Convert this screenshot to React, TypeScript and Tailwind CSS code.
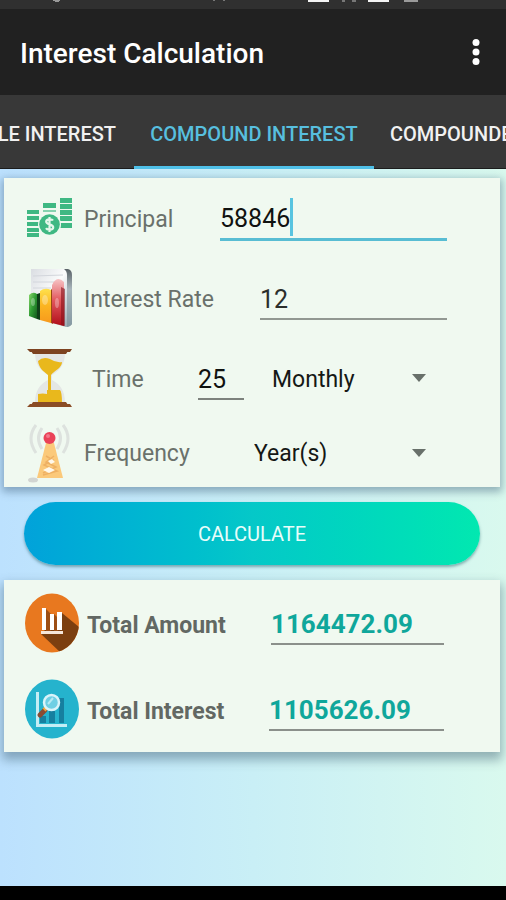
import { useState } from "react";

const MoneyIcon = () => (
  <svg viewBox="0 0 48 42" className="h-[42px] w-12 shrink-0" aria-hidden="true">
    <g fill="#3fb883">
      {[13, 19, 25, 31, 36].map((y) => (
        <rect key={y} x="1" y={y} width="12" height="4" />
      ))}
      <rect x="17" y="6" width="13" height="5" />
      <rect x="17" y="13" width="13" height="2" opacity="0.6" />
      {[1, 7, 13, 19, 26].map((y) => (
        <rect key={y} x="34" y={y} width="12" height="5" />
      ))}
      <circle cx="23.5" cy="27.5" r="11.5" fill="#f0f9f0" />
      <circle cx="23.5" cy="27.5" r="10.3" />
    </g>
    <path
      d="M27 23.5c-1-1.6-6.8-1.8-6.8 1.2 0 3.2 7 2.2 7 5.6 0 3-6 3-7.2.8M23.5 20v15"
      fill="none"
      stroke="#e6f7ec"
      strokeWidth="2.2"
    />
  </svg>
);

const RateIcon = () => (
  <svg viewBox="0 0 48 62" className="h-[62px] w-12 shrink-0" aria-hidden="true">
    <defs>
      <linearGradient id="sheet" x1="0" y1="0" x2="1" y2="1">
        <stop offset="0" stopColor="#dadde2" />
        <stop offset="0.45" stopColor="#fbfcfc" />
        <stop offset="0.75" stopColor="#c3ced3" />
        <stop offset="1" stopColor="#8c9ea6" />
      </linearGradient>
      <linearGradient id="edge" x1="0" y1="0" x2="0" y2="1">
        <stop offset="0" stopColor="#596267" />
        <stop offset="0.35" stopColor="#a9b6bc" />
        <stop offset="1" stopColor="#8599a2" />
      </linearGradient>
      <linearGradient id="green" x1="0" y1="0" x2="1" y2="1">
        <stop offset="0" stopColor="#8bd86d" />
        <stop offset="0.5" stopColor="#2f9a33" />
        <stop offset="1" stopColor="#12571c" />
      </linearGradient>
      <linearGradient id="yellow" x1="0" y1="0" x2="0" y2="1">
        <stop offset="0" stopColor="#ffe14d" />
        <stop offset="0.5" stopColor="#fbb421" />
        <stop offset="1" stopColor="#f79a1d" />
      </linearGradient>
      <linearGradient id="red" x1="0" y1="0" x2="0" y2="1">
        <stop offset="0" stopColor="#f6c3c5" />
        <stop offset="0.45" stopColor="#e2575c" />
        <stop offset="1" stopColor="#b00d18" />
      </linearGradient>
    </defs>
    <path d="M5 2h36q4 1 5 5v50q-2 3-6 3L5 50z" fill="url(#sheet)" />
    <path d="M38 2h4q4 1 4 6v49q-2 3-5 3V8q0-4-3-6z" fill="url(#edge)" />
    <path d="M7 9l30-1M7 15h26M7 21h18" stroke="#d3d6dc" strokeWidth="1" />
    <path d="M3 28q4-4 8-1v25L3 49z" fill="url(#green)" />
    <path d="M11 27l3-1v27l-3-1z" fill="#0f3f18" />
    <path d="M14 24q5-4 11-1v33l-11-3z" fill="url(#yellow)" />
    <path d="M25 23v33l2 1V20z" fill="#9a4a12" />
    <path d="M26 18q5-10 12-3v44l-12-3z" fill="url(#red)" />
    <path d="M35 20v38l4 1V22z" fill="#85101a" opacity="0.6" />
    <ellipse cx="7" cy="35" rx="2" ry="4" fill="#fff" opacity="0.3" />
    <ellipse cx="19" cy="33" rx="3" ry="5" fill="#fff" opacity="0.3" />
    <ellipse cx="31" cy="36" rx="2" ry="5" fill="#fff" opacity="0.3" />
  </svg>
);

const HourglassIcon = () => (
  <svg viewBox="0 0 48 60" className="h-[60px] w-12 shrink-0" aria-hidden="true">
    <path d="M9 5h30c0 13-7 18-13 22v5c7 4 13 9 13 23H9c0-14 6-19 13-23v-5C16 23 9 18 9 5z" fill="#e4e7e5" />
    <path d="M12 13q5-5 12-2 6 4 12 3c0 6-7 8-11 13v20h-3V27c-5-4-9-7-10-14z" fill="#e9b81c" />
    <path d="M12 55v-9q5-1 9 0v-4h13q2 2 2 13z" fill="#e9b81c" />
    <path d="M1 1h45l-2 3H4zM5 3h37l-2 3H7z" fill="#7d4320" />
    <path d="M1 59h45l-2-3H4zM5 57h37l-2-3H7z" fill="#8a4c25" />
  </svg>
);

const AntennaIcon = () => (
  <svg viewBox="0 0 48 60" className="h-[60px] w-12 shrink-0" aria-hidden="true">
    <path
      d="M10 2q-10 13 0 28M16 5q-7 10 0 21M37 2q10 13 0 28M31 5q7 10 0 21"
      fill="none"
      stroke="#dde2de"
      strokeWidth="3"
    />
    <ellipse cx="7" cy="57" rx="5" ry="2.5" fill="#d2d5d2" />
    <path d="M20 20h8l9 35H11z" fill="#fbc97a" />
    <path d="M20 33l7 4-9 5 13 6-14 4M28 33l-8 6 10 5-13 6" fill="none" stroke="#eeb063" strokeWidth="1.5" />
    <path d="M17 47l6-3 6 3-6 3zM22 38l4-2 3 3-4 2z" fill="#fff8ea" />
    <circle cx="23.5" cy="15" r="6" fill="#ea4257" />
    <circle cx="22" cy="13" r="2" fill="#f3788a" />
  </svg>
);

const AmountIcon = () => (
  <svg viewBox="0 0 54 60" className="h-[60px] w-[54px] shrink-0" aria-hidden="true">
    <defs>
      <clipPath id="amountDisc">
        <ellipse cx="27" cy="30" rx="27" ry="29.5" />
      </clipPath>
    </defs>
    <g clipPath="url(#amountDisc)">
      <path d="M0 0h54v60H0z" fill="#e8781f" />
      <path d="M37 20l17 14v26H36L16 41z" fill="#7c3f10" />
      <path d="M21 16l5 5v18h-5zM29 21l4 4v14h-4z" fill="#9d4e14" />
    </g>
    <path d="M17 15h4v22h-4zM25 21h4v16h-4zM32 19h5v18h-5z" fill="#fff" />
    <path d="M16 38h22v3H16z" fill="#f6e6da" />
  </svg>
);

const InterestIcon = () => (
  <svg viewBox="0 0 54 60" className="h-[60px] w-[54px] shrink-0" aria-hidden="true">
    <ellipse cx="27" cy="30" rx="27" ry="29.5" fill="#25b3cd" />
    <path d="M15 37h6v7h-6zM24 32h6v12h-6zM34 19h5v25h-5z" fill="#167f9f" />
    <path d="M11 13h3v32h28v3H11z" fill="#c4edf5" />
    <path d="M20 31l-5 5" stroke="#8a4b32" strokeWidth="5" strokeLinecap="round" />
    <path d="M22 28l-3 3" stroke="#f0a33c" strokeWidth="4" />
    <circle cx="26.5" cy="23.5" r="7.5" fill="#6fcfe4" stroke="#d9f4fa" strokeWidth="2.5" />
    <path d="M23 25l5-6" stroke="#b6eaf4" strokeWidth="2" />
  </svg>
);

const labelClass = "shrink-0 pt-1 text-[23px] text-[#6a716b]";

type DropdownProps = {
  id: string;
  options: string[];
  value: string;
  onChange: (value: string) => void;
};

const Dropdown = ({ id, options, value, onChange }: DropdownProps) => (
  <div className="relative min-w-0 flex-1">
    <select
      id={id}
      aria-label={id}
      value={value}
      onChange={(e) => onChange(e.target.value)}
      className="h-11 w-full appearance-none bg-transparent pt-1 text-[23px] text-[#151815] outline-none"
    >
      {options.map((option) => (
        <option key={option}>{option}</option>
      ))}
    </select>
    <svg
      viewBox="0 0 14 8"
      className="pointer-events-none absolute top-[18px] right-[21px] h-2 w-3.5"
      aria-hidden="true"
    >
      <path d="M0 0h14L7 8z" fill="#68706a" />
    </svg>
  </div>
);

const tabs = ["Simple Interest", "Compound Interest", "Compounded Interest"];

export default function App() {
  const [principal, setPrincipal] = useState("58846");
  const [rate, setRate] = useState("12");
  const [time, setTime] = useState("25");
  const [period, setPeriod] = useState("Monthly");
  const [frequency, setFrequency] = useState("Year(s)");

  const results = [
    { id: "amount", label: "Total Amount", value: "1164472.09", icon: <AmountIcon />, width: "w-[184px]" },
    { id: "interest", label: "Total Interest", value: "1105626.09", icon: <InterestIcon />, width: "w-[182px]" },
  ];

  return (
    <div className="flex min-h-screen flex-col overflow-hidden bg-linear-to-r from-[#bce1fe] via-[#c9eff6] to-[#d9f9ee] font-[Roboto,sans-serif]">
      <div className="flex h-[9px] items-start bg-[#303030]">
        <svg viewBox="0 0 506 9" className="h-[9px] w-full" aria-hidden="true">
          <path d="M308 0h21v2h-21zM368 0h21v2h-21z" fill="#f4f4f4" />
          <path d="M53 0h7v1h-1v1h-4v-1h-2zM404 0h14v2h-14z" fill="#9a9a9a" />
          <path d="M342 0h3v2h-3zM352 0h4v2h-4zM213 0h2v1h-2zM223 0h2v1h-2z" fill="#777" />
        </svg>
      </div>

      <header className="flex h-[86px] items-center justify-between bg-[#212121] pr-4 pl-5">
        <h1 className="pt-1 text-[28px] font-medium text-white">Interest Calculation</h1>
        <button type="button" aria-label="More options" className="flex w-7 justify-center">
          <svg viewBox="0 0 8 28" className="h-7 w-2" fill="#fff" aria-hidden="true">
            <circle cx="4" cy="4.5" r="3.5" />
            <circle cx="4" cy="14" r="3.5" />
            <circle cx="4" cy="23.5" r="3.5" />
          </svg>
        </button>
      </header>

      <nav className="flex h-[74px] bg-[#383838] text-[20px] font-medium whitespace-nowrap uppercase">
        <button
          type="button"
          className="flex min-w-0 flex-1 items-center justify-end overflow-hidden border-b border-[#1c1c1c] pt-1 pr-[18px] text-[#f1f1f1] uppercase"
        >
          {tabs[0]}
        </button>
        <button
          type="button"
          className="w-60 shrink-0 border-b-[3px] border-[#4fc0e8] pt-1.5 text-[#57bfdf] uppercase"
        >
          {tabs[1]}
        </button>
        <button
          type="button"
          className="flex min-w-0 flex-1 items-center overflow-hidden border-b border-[#1c1c1c] pt-1 pl-4 text-[#f1f1f1] uppercase"
        >
          {tabs[2]}
        </button>
      </nav>

      <main className="flex flex-1 flex-col pt-[9px] pr-1.5 pb-8 pl-1">
        <form className="flex flex-col" onSubmit={(e) => e.preventDefault()}>
          <section className="bg-[#f0f9f0] pr-[53px] pl-[22px] shadow-[0_3px_8px_2px_rgba(60,90,120,0.45)]">
            <div className="flex h-20 items-center gap-2.5">
              <MoneyIcon />
              <div className="flex min-w-0 flex-1 items-center">
                <label htmlFor="principal" className={`${labelClass} w-[136px]`}>
                  Principal
                </label>
                <div className="flex h-[46px] min-w-0 flex-1 items-center border-b-[3px] border-[#58bdd3]">
                  <input
                    id="principal"
                    value={principal}
                    onChange={(e) => setPrincipal(e.target.value)}
                    className="[field-sizing:content] bg-transparent pt-1 text-[25px] text-[#101210] outline-none"
                  />
                  <span className="h-[38px] w-[3px] bg-[#58c4e0]" />
                </div>
              </div>
            </div>

            <div className="flex h-20 items-center gap-2.5">
              <RateIcon />
              <div className="flex min-w-0 flex-1 items-center">
                <label htmlFor="rate" className={`${labelClass} w-44`}>
                  Interest Rate
                </label>
                <input
                  id="rate"
                  value={rate}
                  onChange={(e) => setRate(e.target.value)}
                  className="h-11 min-w-0 flex-1 border-b-2 border-[#929892] bg-transparent pt-1 text-[25px] text-[#2b2e2b] outline-none"
                />
              </div>
            </div>

            <div className="flex h-20 items-center gap-2.5">
              <HourglassIcon />
              <div className="flex min-w-0 flex-1 items-center">
                <label htmlFor="time" className={`${labelClass} w-[114px] pl-2`}>
                  Time
                </label>
                <input
                  id="time"
                  value={time}
                  onChange={(e) => setTime(e.target.value)}
                  className="mr-7 h-11 w-[46px] border-b-2 border-[#7d827d] bg-transparent pt-1 text-[25px] text-[#101210] outline-none"
                />
                <Dropdown id="period" options={["Monthly", "Yearly"]} value={period} onChange={setPeriod} />
              </div>
            </div>

            <div className="flex h-[69px] items-center gap-2.5">
              <AntennaIcon />
              <div className="flex min-w-0 flex-1 items-center">
                <label htmlFor="frequency" className={`${labelClass} w-[170px]`}>
                  Frequency
                </label>
                <Dropdown id="frequency" options={["Year(s)", "Month(s)"]} value={frequency} onChange={setFrequency} />
              </div>
            </div>
          </section>

          <button
            type="submit"
            className="mx-5 my-[15px] h-[63px] rounded-full bg-linear-to-r from-[#02a2da] via-[#05c8c8] to-[#02e8b0] text-[20px] text-[#e8fdfa] shadow-[0_2px_3px_rgba(40,100,110,0.5)]"
          >
            CALCULATE
          </button>
        </form>

        <section className="bg-[#f0f9f0] pr-14 pl-[21px] shadow-[0_6px_10px_2px_rgba(60,90,110,0.45)]">
          {results.map((item) => (
            <div key={item.id} className="flex h-[86px] items-center gap-2">
              {item.icon}
              <div className="flex min-w-0 flex-1 items-center">
                <label htmlFor={item.id} className={`shrink-0 pt-1.5 text-[23px] font-bold text-[#626863] ${item.width}`}>
                  {item.label}
                </label>
                <input
                  id={item.id}
                  readOnly
                  value={item.value}
                  className="h-11 min-w-0 flex-1 border-b-2 border-[#8b908b] bg-transparent pt-1 text-[26px] font-bold text-[#0fa79b] outline-none"
                />
              </div>
            </div>
          ))}
        </section>
      </main>

      <footer className="h-3.5 bg-black" />
    </div>
  );
}
